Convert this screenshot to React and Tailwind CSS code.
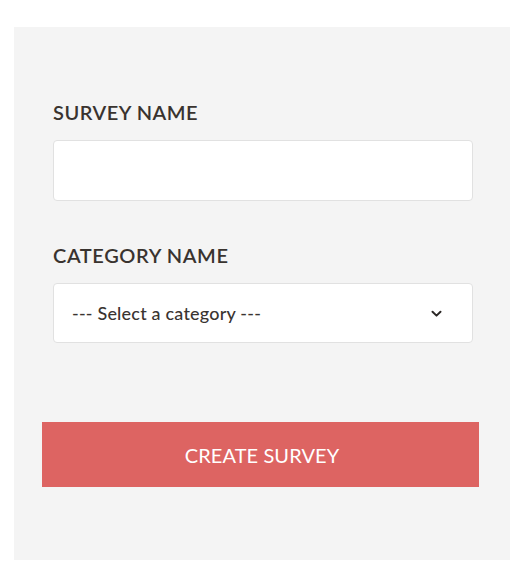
export default function App() {
  return (
    <div className="min-h-[588px] w-[524px] bg-white pt-[27px] pl-[14px]" style={{ fontFamily: "Lato, 'Open Sans', sans-serif" }}>
      <div className="w-[496px] h-[533px] bg-[#f4f4f4] pt-[73px]">
        <div className="pl-[39px] w-[459px]">
          <div className="text-[20px] leading-[24px] font-semibold text-[#39332f] tracking-[0.5px]">SURVEY NAME</div>
          <div className="mt-[16px] h-[61px] bg-white border border-[#e1e1e1] rounded-[4px]"></div>
          <div className="mt-[42px] text-[20px] leading-[24px] font-semibold text-[#39332f] tracking-[0.6px]">CATEGORY NAME</div>
          <div className="mt-[16px] h-[60px] bg-white border border-[#e1e1e1] rounded-[4px] flex items-center justify-between pl-[18px] pr-[30px]">
            <span className="text-[18px] text-[#3a3431] font-medium tracking-[0.2px]">--- Select a category ---</span>
            <svg width="11" height="8" viewBox="0 0 11 8" className="mt-[2px]">
              <path d="M1.5 1.8 L5.5 5.6 L9.5 1.8" fill="none" stroke="#2b2725" strokeWidth="2" strokeLinecap="round" strokeLinejoin="round" />
            </svg>
          </div>
        </div>
        <div className="pl-[28px] mt-[79px]">
          <button className="w-[437px] h-[65px] bg-[#dd6462] text-white text-[20px] tracking-[0.1px] flex items-center justify-center pl-[3px]">CREATE SURVEY</button>
        </div>
      </div>
    </div>
  );
}
